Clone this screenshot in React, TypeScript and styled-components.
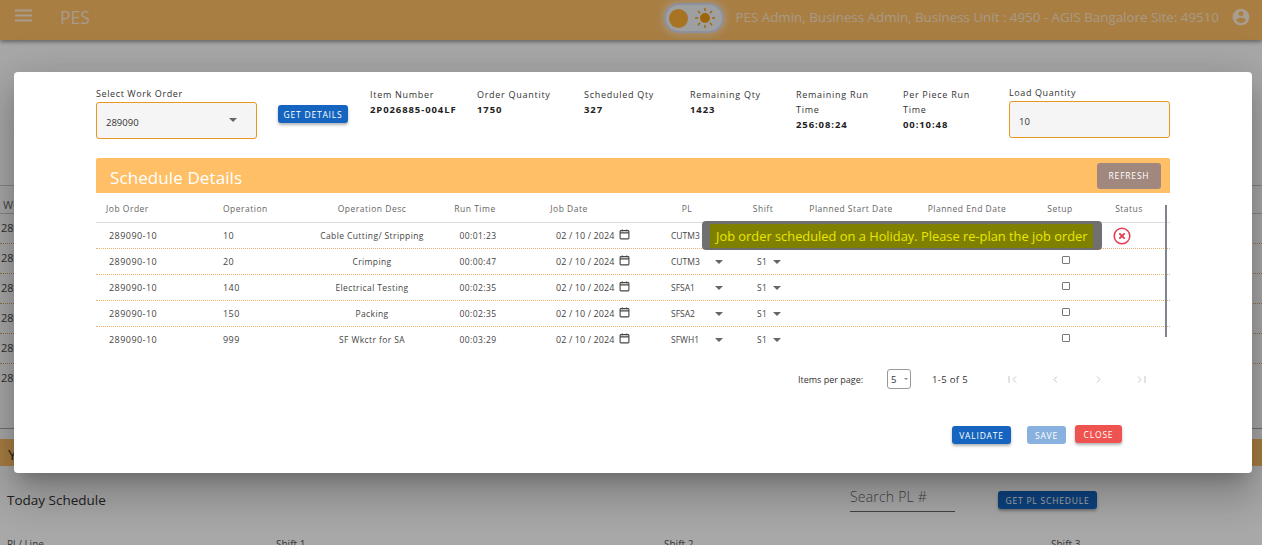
import React from "react";
import styled, { createGlobalStyle } from "styled-components";

const Global = createGlobalStyle`
  html, body { margin: 0; padding: 0; height: 100%; overflow: hidden; background: #fff; }
  * { box-sizing: border-box; }
  body { font-family: "Open Sans", "Noto Sans", sans-serif; color: #333; }
`;

const Page = styled.div`position: relative; width: 1262px; height: 545px; overflow: hidden; background: #fff;`;
const AppBar = styled.header`
  height: 40px; background: #ffbf66; display: flex; align-items: center; color: #fff;
  box-shadow: 0 2px 4px rgba(0,0,0,.4); padding: 0 11px 6px 15px; position: relative;
`;
const MenuWrap = styled.span`display: flex; margin-top: -4px;`;
const Brand = styled.span`font-size: 17.5px; margin-left: 27px; flex: 1; opacity: .7;`;
const Who = styled.span`font-size: 13.35px; letter-spacing: 0; margin-right: 12px; opacity: .65;`;
const Toggle = styled.div`
  position: absolute; left: 664px; top: 3px; width: 60px; height: 30px; border-radius: 15px;
  background: #f0f1f5; border: 2px solid #d6dcef; box-shadow: 0 0 6px 3px rgba(255,255,255,.4);
  display: flex; align-items: center; gap: 6px; padding: 0 4px 0 3px;
`;
const Knob = styled.span`width: 19px; height: 19px; border-radius: 50%; background: #ffaf35;`;

const BackTable = styled.section`margin-top: 145px; border-top: 1px solid #ccc;`;
const BackHead = styled.div`height: 28px; padding: 11px 0 0 3px; font-size: 11px; line-height: 15px; color: #666; border-bottom: 1px solid #ccc;`;
const BackRow = styled.div`height: 30px; padding: 6px 0 0 1px; font-size: 11px; color: #444; border-bottom: 1px dotted #d8a45c; &:nth-child(7) { border-bottom: 0; }`;
const BackFooter = styled.div`height: 35px; border-bottom: 1px solid #aaa;`;
const Banner = styled.div`
  margin-top: 10px; height: 27px; background: #ffbf66; font-size: 15px; padding: 5px 0 0 8px; color: #333;
`;
const ScheduleBar = styled.div`display: flex; align-items: flex-start; padding: 25px 0 0 7px; height: 71px;`;
const ScheduleTitle = styled.h2`margin: 0; font-size: 13.5px; font-weight: 400; width: 843px; color: #333;`;
const SearchPl = styled.div`width: 105px; height: 25px; margin-top: -4px; border-bottom: 1px solid #666; font-size: 14px; color: #666; font-weight: 300; letter-spacing: .2px;`;
const ShiftRow = styled.div`display: grid; grid-template-columns: 269px 388px 387px 200px; padding-left: 7px; font-size: 10px; color: #555;`;

const Scrim = styled.div`position: absolute; inset: 0; background: rgba(0,0,0,.34);`;
const Dialog = styled.div`
  position: absolute; left: 14px; top: 72px; width: 1238px; height: 401px; background: #fff; border-radius: 4px;
  box-shadow: 0 11px 15px -7px rgba(0,0,0,.2), 0 24px 38px 3px rgba(0,0,0,.14), 0 9px 46px 8px rgba(0,0,0,.12);
  padding: 15px 82px 0;
`;
const TopRow = styled.div`display: flex; align-items: flex-start; height: 71px;`;
const FieldWrap = styled.div<{ $w: number; $mt?: number }>`width: ${p => p.$w}px; margin-top: ${p => p.$mt ?? 0}px; flex: none;`;
const FieldLabel = styled.div`font-size: 9px; letter-spacing: .6px; color: #333; line-height: 13px; height: 15px;`;
const FieldBox = styled.div`
  height: 37px; border: 1px solid #e6981f; border-radius: 3px; background: #f5f5f5; font-size: 9.5px; color: #333;
  display: flex; align-items: center; justify-content: space-between; padding: 3px 19px 0 9px; position: relative;
`;
const Caret = styled.i<{ $tone?: string; $w?: number; $up?: number }>`
  display: inline-block; width: 0; height: 0; flex: none; margin-top: ${p => -(p.$up ?? 0)}px;
  border-left: ${p => p.$w ?? 4.5}px solid transparent; border-right: ${p => p.$w ?? 4.5}px solid transparent;
  border-top: ${p => p.$w ?? 4.5}px solid ${p => p.$tone ?? "#666"};
`;
const Btn = styled.button<{ $bg: string; $w: number; $h?: number; $op?: number }>`
  width: ${p => p.$w}px; height: ${p => p.$h ?? 18}px; flex: none; border: 0; border-radius: 3px; background: ${p => p.$bg};
  color: #fff; font: 400 8.5px "Open Sans", sans-serif; letter-spacing: .8px; padding: 0; opacity: ${p => p.$op ?? 1};
  box-shadow: 0 2px 3px rgba(0,0,0,.3); text-transform: uppercase;
`;
const GetDetails = styled(Btn)`margin: 18px 22px 0 21px;`;
const RefreshBtn = styled(Btn)`box-shadow: none;`;
const GetPlBtn = styled(Btn)`margin-left: 43px;`;
const Info = styled.div<{ $w: number }>`width: ${p => p.$w}px; flex: none;`;
const InfoLabel = styled.div`font-size: 9px; letter-spacing: .72px; line-height: 15px; color: #333; max-width: 85px;`;
const InfoValue = styled.div`font-size: 9.5px; font-weight: 700; letter-spacing: .9px; line-height: 15px; color: #222;`;

const TitleBar = styled.div`
  height: 35px; background: #ffbf66; border-radius: 2px 2px 0 0; display: flex; align-items: center; justify-content: space-between;
  padding: 0 9px 0 14px;
`;
const Title = styled.h3`margin: 3px 0 0; font-size: 17px; font-weight: 400; color: #fff; letter-spacing: .1px;`;
const TableWrap = styled.div`position: relative; height: 172px;`;
const HeadRow = styled.div`
  height: 30px; display: grid; align-items: center; border-bottom: 1px solid #ddd; font-size: 8.5px; letter-spacing: .5px; color: #666; padding-top: 2px;
  grid-template-columns: 117px 92px 134px 72px 116px 120px 32px 144px 88px 98px 40px;
`;
const HeadCell = styled.span<{ $left?: boolean }>`
  text-align: ${p => p.$left ? "left" : "center"}; padding-left: ${p => p.$left ? "10px" : 0}; white-space: nowrap;
`;
const RowList = styled.div`display: block;`;
const Row = styled.div`
  height: 26px; display: grid; align-items: center; border-bottom: 1px dotted #f0b070; font-size: 9px; letter-spacing: .45px; color: #444;
  grid-template-columns: 117px 92px 134px 78px 154px 86px 36px 243px 60px 52px;
  &:last-child { border-bottom-color: transparent; }
`;
const JobCell = styled.span`padding-left: 13px;`;
const OpCell = styled.span`padding-left: 10px;`;
const Center = styled.span`text-align: center; white-space: nowrap; font-size: 8.5px; letter-spacing: .4px;`;
const DateCell = styled.span`padding-left: 39px; display: flex; align-items: center; gap: 3px; font-size: 9px; letter-spacing: .1px; white-space: nowrap;`;
const CalendarMark = styled.svg`margin-top: -3px; margin-left: 1px;`;
const PlCell = styled.span`display: flex; align-items: center; font-size: 8.5px; letter-spacing: 0;`;
const PlName = styled.span`width: 44px;`;
const ShiftCell = styled.span`display: flex; align-items: center; gap: 6px; font-size: 8.5px;`;
const Box = styled.span`width: 8px; height: 8px; border: 1px solid #777; border-radius: 1px; justify-self: center; margin-top: -3px;`;
const StatusCell = styled.span`display: flex; justify-content: center;`;
const Tip = styled.div`
  position: absolute; left: 606px; top: 28px; width: 400px; height: 29px; border-radius: 4px; background: rgba(97,97,97,.9);
  display: flex; align-items: center; padding: 0 9px 0 8px;
`;
const TipText = styled.span`
  width: 100%; height: 24px; background: #808000; color: #e8e800; font-size: 12.85px; line-height: 24px; padding-left: 6px; white-space: nowrap;
`;
const Scrollbar = styled.div`position: absolute; right: 3px; top: 12px; width: 2px; height: 132px; background: #80848c;`;

const Pager = styled.div`display: flex; align-items: center; height: 20px; margin-top: 4px; font-size: 9px; color: #333;`;
const PagerLabel = styled.span`margin-left: 702px; width: 89px; font-size: 9px;`;
const PageSelect = styled.span`
  width: 24px; height: 20px; border: 1px solid #999; border-radius: 3px; display: flex; align-items: center; justify-content: space-between;
  padding: 0 2px 0 3px; font-size: 9.5px; margin-right: 21px;
`;
const Range = styled.span`font-size: 9.5px; letter-spacing: .35px; width: 74px;`;
const PageIcons = styled.span`display: flex; gap: 30px;`;
const Actions = styled.div`display: flex; align-items: flex-start; margin: 36px 0 0 856px;`;
const ValidateBtn = styled(Btn)`margin: 1px 16px 0 0;`;
const SaveBtn = styled(Btn)`margin: 1px 9px 0 0; box-shadow: none;`;

const Calendar = () => (
  <CalendarMark width="11" height="11" viewBox="0 0 10 10" fill="none" stroke="#444" strokeWidth="1"><rect x="1" y="1.500" width="8" height="7.500" rx=".8"/><path d="M1 3.500h8M3 .5v1.500M7 .5v1.500"/></CalendarMark>
);
const PageArrow = ({ d }: { d: string }) => (
  <svg width="13" height="13" viewBox="0 0 13 13" fill="none" stroke="#c4c4c4" strokeWidth="1"><path d={d}/></svg>
);
const Sun = () => (
  <svg width="22" height="22" viewBox="0 0 22 22"><circle cx="11" cy="11" r="5" fill="#f09a10"/><g stroke="#f09a10" strokeWidth="1.400" strokeLinecap="round"><path d="M11 1.500v2M11 18.500v2M1.500 11h2M18.500 11h2M4.300 4.300l1.400 1.400M16.300 16.300l1.400 1.400M4.300 17.700l1.400-1.400M16.300 5.700l1.400-1.400"/></g></svg>
);
const Account = () => (
  <svg width="20" height="20" viewBox="0 0 24 24" fill="#fff" opacity=".75"><path d="M12 2C6.480 2 2 6.480 2 12s4.480 10 10 10 10-4.480 10-10S17.520 2 12 2zm0 3c1.660 0 3 1.340 3 3s-1.340 3-3 3-3-1.340-3-3 1.340-3 3-3zm0 14.200c-2.500 0-4.710-1.280-6-3.220.03-1.990 4-3.080 6-3.080 1.990 0 5.970 1.090 6 3.080-1.290 1.940-3.500 3.220-6 3.220z"/></svg>
);
const Menu = () => (
  <svg width="18" height="13" viewBox="0 0 18 13" fill="#fff" opacity=".75"><path d="M0 .5h17v2H0zM0 5.500h17v2H0zM0 10.500h17v2H0z"/></svg>
);
const ErrorIcon = () => (
  <svg width="18" height="18" viewBox="0 0 18 18" fill="none" stroke="#e53950"><circle cx="9" cy="9" r="7.800" strokeWidth="1.500"/><path d="M6.300 6.300l5.400 5.400M11.700 6.300l-5.400 5.400" strokeWidth="1.800"/></svg>
);

const rows = [
  { op: "10", desc: "Cable Cutting/ Stripping", time: "00:01:23", pl: "CUTM3" },
  { op: "20", desc: "Crimping", time: "00:00:47", pl: "CUTM3" },
  { op: "140", desc: "Electrical Testing", time: "00:02:35", pl: "SFSA1" },
  { op: "150", desc: "Packing", time: "00:02:35", pl: "SFSA2" },
  { op: "999", desc: "SF Wkctr for SA", time: "00:03:29", pl: "SFWH1" },
];
const heads = ["Job Order", "Operation", "Operation Desc", "Run Time", "Job Date", "PL", "Shift", "Planned Start Date", "Planned End Date", "Setup", "Status"];
const infos = [
  { w: 107, l: "Item Number", v: "2P026885-004LF" },
  { w: 107, l: "Order Quantity", v: "1750" },
  { w: 106, l: "Scheduled Qty", v: "327" },
  { w: 106, l: "Remaining Qty", v: "1423" },
  { w: 107, l: "Remaining Run Time", v: "256:08:24" },
  { w: 106, l: "Per Piece Run Time", v: "00:10:48" },
];

export default function App() {
  return (
    <Page>
      <Global />
      <AppBar>
        <MenuWrap><Menu /></MenuWrap>
        <Brand>PES</Brand>
        <Who>PES Admin, Business Admin, Business Unit : 4950 - AGIS Bangalore Site: 49510</Who>
        <Account />
        <Toggle><Knob /><Sun /></Toggle>
      </AppBar>
      <BackTable>
        <BackHead>Work Order</BackHead>
        {[0, 1, 2, 3, 4, 5].map(i => <BackRow key={i}>289090</BackRow>)}
        <BackFooter />
      </BackTable>
      <Banner>You have schedules</Banner>
      <ScheduleBar>
        <ScheduleTitle>Today Schedule</ScheduleTitle>
        <SearchPl>Search PL #</SearchPl>
        <GetPlBtn $bg="#1565c0" $w={99}>Get PL Schedule</GetPlBtn>
      </ScheduleBar>
      <ShiftRow><span>Pl / Line</span><span>Shift 1</span><span>Shift 2</span><span>Shift 3</span></ShiftRow>
      <Scrim />
      <Dialog>
        <TopRow>
          <FieldWrap $w={161}>
            <FieldLabel>Select Work Order</FieldLabel>
            <FieldBox>289090<Caret $up={5} /></FieldBox>
          </FieldWrap>
          <GetDetails $bg="#1565c0" $w={70}>Get Details</GetDetails>
          {infos.map(i => (
            <Info key={i.l} $w={i.w}>
              <InfoLabel>{i.l}</InfoLabel>
              <InfoValue>{i.v}</InfoValue>
            </Info>
          ))}
          <FieldWrap $w={161} $mt={-1}>
            <FieldLabel>Load Quantity</FieldLabel>
            <FieldBox>10</FieldBox>
          </FieldWrap>
        </TopRow>
        <TitleBar>
          <Title>Schedule Details</Title>
          <RefreshBtn $bg="#a1887f" $w={64} $h={26}>Refresh</RefreshBtn>
        </TitleBar>
        <TableWrap>
          <HeadRow>
            {heads.map((h, i) => <HeadCell key={h} $left={i < 2}>{h}</HeadCell>)}
          </HeadRow>
          <RowList>
            {rows.map((r, i) => (
              <Row key={r.op}>
                <JobCell>289090-10</JobCell>
                <OpCell>{r.op}</OpCell>
                <Center>{r.desc}</Center>
                <Center>{r.time}</Center>
                <DateCell>02 / 10 / 2024 <Calendar /></DateCell>
                <PlCell><PlName>{r.pl}</PlName><Caret /></PlCell>
                <ShiftCell>S1<Caret /></ShiftCell>
                <span />
                <Box />
                {i === 0 ? <StatusCell><ErrorIcon /></StatusCell> : <span />}
              </Row>
            ))}
          </RowList>
          <Tip><TipText>Job order scheduled on a Holiday. Please re-plan the job order</TipText></Tip>
          <Scrollbar />
        </TableWrap>
        <Pager>
          <PagerLabel>Items per page:</PagerLabel>
          <PageSelect>5<Caret $w={2.5} $tone="#888" /></PageSelect>
          <Range>1-5 of 5</Range>
          <PageIcons>
            <PageArrow d="M3 3v7M10 3.500L7 6.500l3 3" />
            <PageArrow d="M8 3.500L5 6.500l3 3" />
            <PageArrow d="M5 3.500l3 3-3 3" />
            <PageArrow d="M3 3.500l3 3-3 3M10 3v7" />
          </PageIcons>
        </Pager>
        <Actions>
          <ValidateBtn $bg="#1565c0" $w={59}>Validate</ValidateBtn>
          <SaveBtn $bg="#1565c0" $w={39} $op={0.5}>Save</SaveBtn>
          <Btn $bg="#ef5350" $w={47}>Close</Btn>
        </Actions>
      </Dialog>
    </Page>
  );
}
